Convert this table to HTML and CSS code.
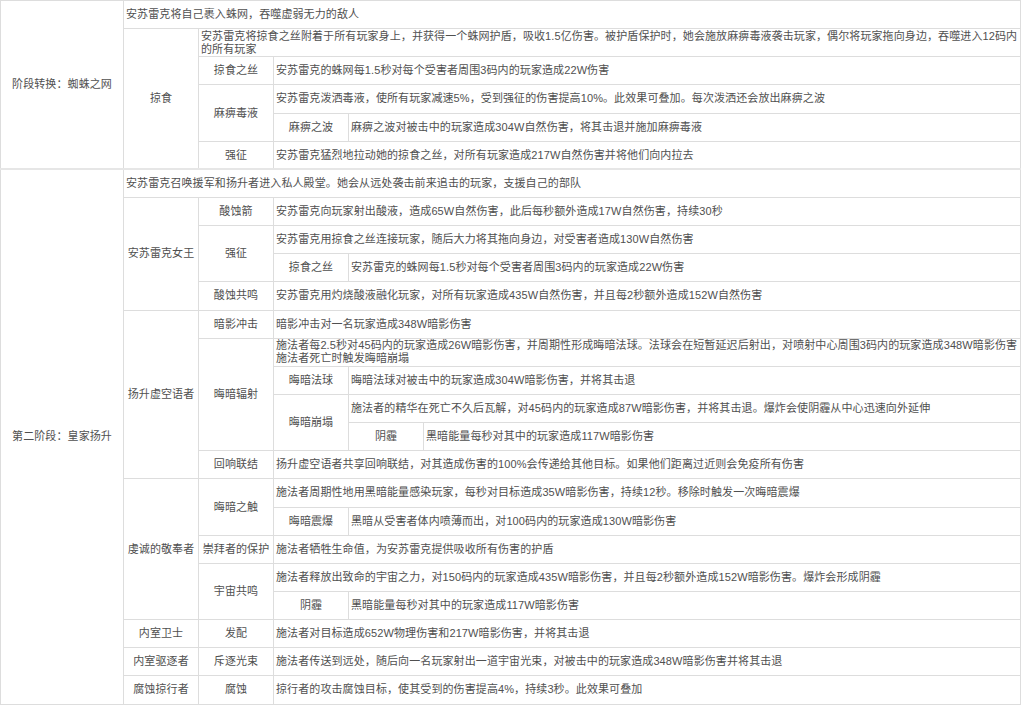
FILE: index.html
```html
<!DOCTYPE html>
<html lang="zh-CN">
<head>
<meta charset="utf-8">
<title>安苏雷克</title>
<link rel="stylesheet" href="styles.css">
</head>
<body>
<table class="boss">
  <colgroup>
    <col class="c1"><col class="c2"><col class="c3"><col class="c4"><col class="c5"><col class="c6">
  </colgroup>
  <tbody class="phase">
    <tr>
      <td class="lbl" rowspan="6">阶段转换：蜘蛛之网</td>
      <td class="txt" colspan="5">安苏雷克将自己裹入蛛网，吞噬虚弱无力的敌人</td>
    </tr>
    <tr>
      <td class="lbl" rowspan="5">掠食</td>
      <td class="txt two" colspan="4">安苏雷克将掠食之丝附着于所有玩家身上，并获得一个蛛网护盾，吸收1.5亿伤害。被护盾保护时，她会施放麻痹毒液袭击玩家，偶尔将玩家拖向身边，吞噬进入12码内<br>的所有玩家</td>
    </tr>
    <tr>
      <td class="lbl">掠食之丝</td>
      <td class="txt" colspan="3">安苏雷克的蛛网每1.5秒对每个受害者周围3码内的玩家造成22W伤害</td>
    </tr>
    <tr>
      <td class="lbl" rowspan="2">麻痹毒液</td>
      <td class="txt" colspan="3">安苏雷克泼洒毒液，使所有玩家减速5%，受到强征的伤害提高10%。此效果可叠加。每次泼洒还会放出麻痹之波</td>
    </tr>
    <tr>
      <td class="lbl">麻痹之波</td>
      <td class="txt" colspan="2">麻痹之波对被击中的玩家造成304W自然伤害，将其击退并施加麻痹毒液</td>
    </tr>
    <tr>
      <td class="lbl">强征</td>
      <td class="txt" colspan="3">安苏雷克猛烈地拉动她的掠食之丝，对所有玩家造成217W自然伤害并将他们向内拉去</td>
    </tr>
  </tbody>
  <tbody class="phase second">
    <tr>
      <td class="lbl" rowspan="19">第二阶段：皇家扬升</td>
      <td class="txt" colspan="5">安苏雷克召唤援军和扬升者进入私人殿堂。她会从远处袭击前来追击的玩家，支援自己的部队</td>
    </tr>
    <tr>
      <td class="lbl" rowspan="4">安苏雷克女王</td>
      <td class="lbl">酸蚀箭</td>
      <td class="txt" colspan="3">安苏雷克向玩家射出酸液，造成65W自然伤害，此后每秒额外造成17W自然伤害，持续30秒</td>
    </tr>
    <tr>
      <td class="lbl" rowspan="2">强征</td>
      <td class="txt" colspan="3">安苏雷克用掠食之丝连接玩家，随后大力将其拖向身边，对受害者造成130W自然伤害</td>
    </tr>
    <tr>
      <td class="lbl">掠食之丝</td>
      <td class="txt" colspan="2">安苏雷克的蛛网每1.5秒对每个受害者周围3码内的玩家造成22W伤害</td>
    </tr>
    <tr>
      <td class="lbl">酸蚀共鸣</td>
      <td class="txt" colspan="3">安苏雷克用灼烧酸液融化玩家，对所有玩家造成435W自然伤害，并且每2秒额外造成152W自然伤害</td>
    </tr>
    <tr>
      <td class="lbl" rowspan="6">扬升虚空语者</td>
      <td class="lbl">暗影冲击</td>
      <td class="txt" colspan="3">暗影冲击对一名玩家造成348W暗影伤害</td>
    </tr>
    <tr>
      <td class="lbl" rowspan="4">晦暗辐射</td>
      <td class="txt two" colspan="3">施法者每2.5秒对45码内的玩家造成26W暗影伤害，并周期性形成晦暗法球。法球会在短暂延迟后射出，对喷射中心周围3码内的玩家造成348W暗影伤害<br>施法者死亡时触发晦暗崩塌</td>
    </tr>
    <tr>
      <td class="lbl">晦暗法球</td>
      <td class="txt" colspan="2">晦暗法球对被击中的玩家造成304W暗影伤害，并将其击退</td>
    </tr>
    <tr>
      <td class="lbl" rowspan="2">晦暗崩塌</td>
      <td class="txt" colspan="2">施法者的精华在死亡不久后瓦解，对45码内的玩家造成87W暗影伤害，并将其击退。爆炸会使阴霾从中心迅速向外延伸</td>
    </tr>
    <tr>
      <td class="lbl">阴霾</td>
      <td class="txt">黑暗能量每秒对其中的玩家造成117W暗影伤害</td>
    </tr>
    <tr>
      <td class="lbl">回响联结</td>
      <td class="txt" colspan="3">扬升虚空语者共享回响联结，对其造成伤害的100%会传递给其他目标。如果他们距离过近则会免疫所有伤害</td>
    </tr>
    <tr>
      <td class="lbl" rowspan="5">虔诚的敬奉者</td>
      <td class="lbl" rowspan="2">晦暗之触</td>
      <td class="txt" colspan="3">施法者周期性地用黑暗能量感染玩家，每秒对目标造成35W暗影伤害，持续12秒。移除时触发一次晦暗震爆</td>
    </tr>
    <tr>
      <td class="lbl">晦暗震爆</td>
      <td class="txt" colspan="2">黑暗从受害者体内喷薄而出，对100码内的玩家造成130W暗影伤害</td>
    </tr>
    <tr>
      <td class="lbl">崇拜者的保护</td>
      <td class="txt" colspan="3">施法者牺牲生命值，为安苏雷克提供吸收所有伤害的护盾</td>
    </tr>
    <tr>
      <td class="lbl" rowspan="2">宇宙共鸣</td>
      <td class="txt" colspan="3">施法者释放出致命的宇宙之力，对150码内的玩家造成435W暗影伤害，并且每2秒额外造成152W暗影伤害。爆炸会形成阴霾</td>
    </tr>
    <tr>
      <td class="lbl">阴霾</td>
      <td class="txt" colspan="2">黑暗能量每秒对其中的玩家造成117W暗影伤害</td>
    </tr>
    <tr>
      <td class="lbl">内室卫士</td>
      <td class="lbl">发配</td>
      <td class="txt" colspan="3">施法者对目标造成652W物理伤害和217W暗影伤害，并将其击退</td>
    </tr>
    <tr>
      <td class="lbl">内室驱逐者</td>
      <td class="lbl">斥逐光束</td>
      <td class="txt" colspan="3">施法者传送到远处，随后向一名玩家射出一道宇宙光束，对被击中的玩家造成348W暗影伤害并将其击退</td>
    </tr>
    <tr>
      <td class="lbl">腐蚀掠行者</td>
      <td class="lbl">腐蚀</td>
      <td class="txt" colspan="3">掠行者的攻击腐蚀目标，使其受到的伤害提高4%，持续3秒。此效果可叠加</td>
    </tr>
  </tbody>
</table>
</body>
</html>
```

FILE: styles.css
```css
html, body {
  margin: 0;
  padding: 0;
  background: #ffffff;
}

body {
  font-family: "Liberation Sans", "Noto Sans CJK SC", sans-serif;
  font-size: 11px;
  letter-spacing: 0.1px;
  color: #505050;
}

.boss {
  width: 1021px;
  table-layout: fixed;
  border-collapse: collapse;
}

.c1 { width: 123px; }
.c2 { width: 75px; }
.c3 { width: 75px; }
.c4 { width: 75px; }
.c5 { width: 75px; }
.c6 { width: auto; }

.boss tr {
  height: 28.15px;
}

.boss td {
  border: 1px solid #dddddd;
  padding: 0 2px;
  line-height: 13px;
  vertical-align: middle;
  word-break: break-all;
}

.boss .lbl {
  text-align: center;
}

.boss .txt {
  text-align: left;
}

.boss .second {
  border-top: 2px solid #e6e6e6;
}
```
